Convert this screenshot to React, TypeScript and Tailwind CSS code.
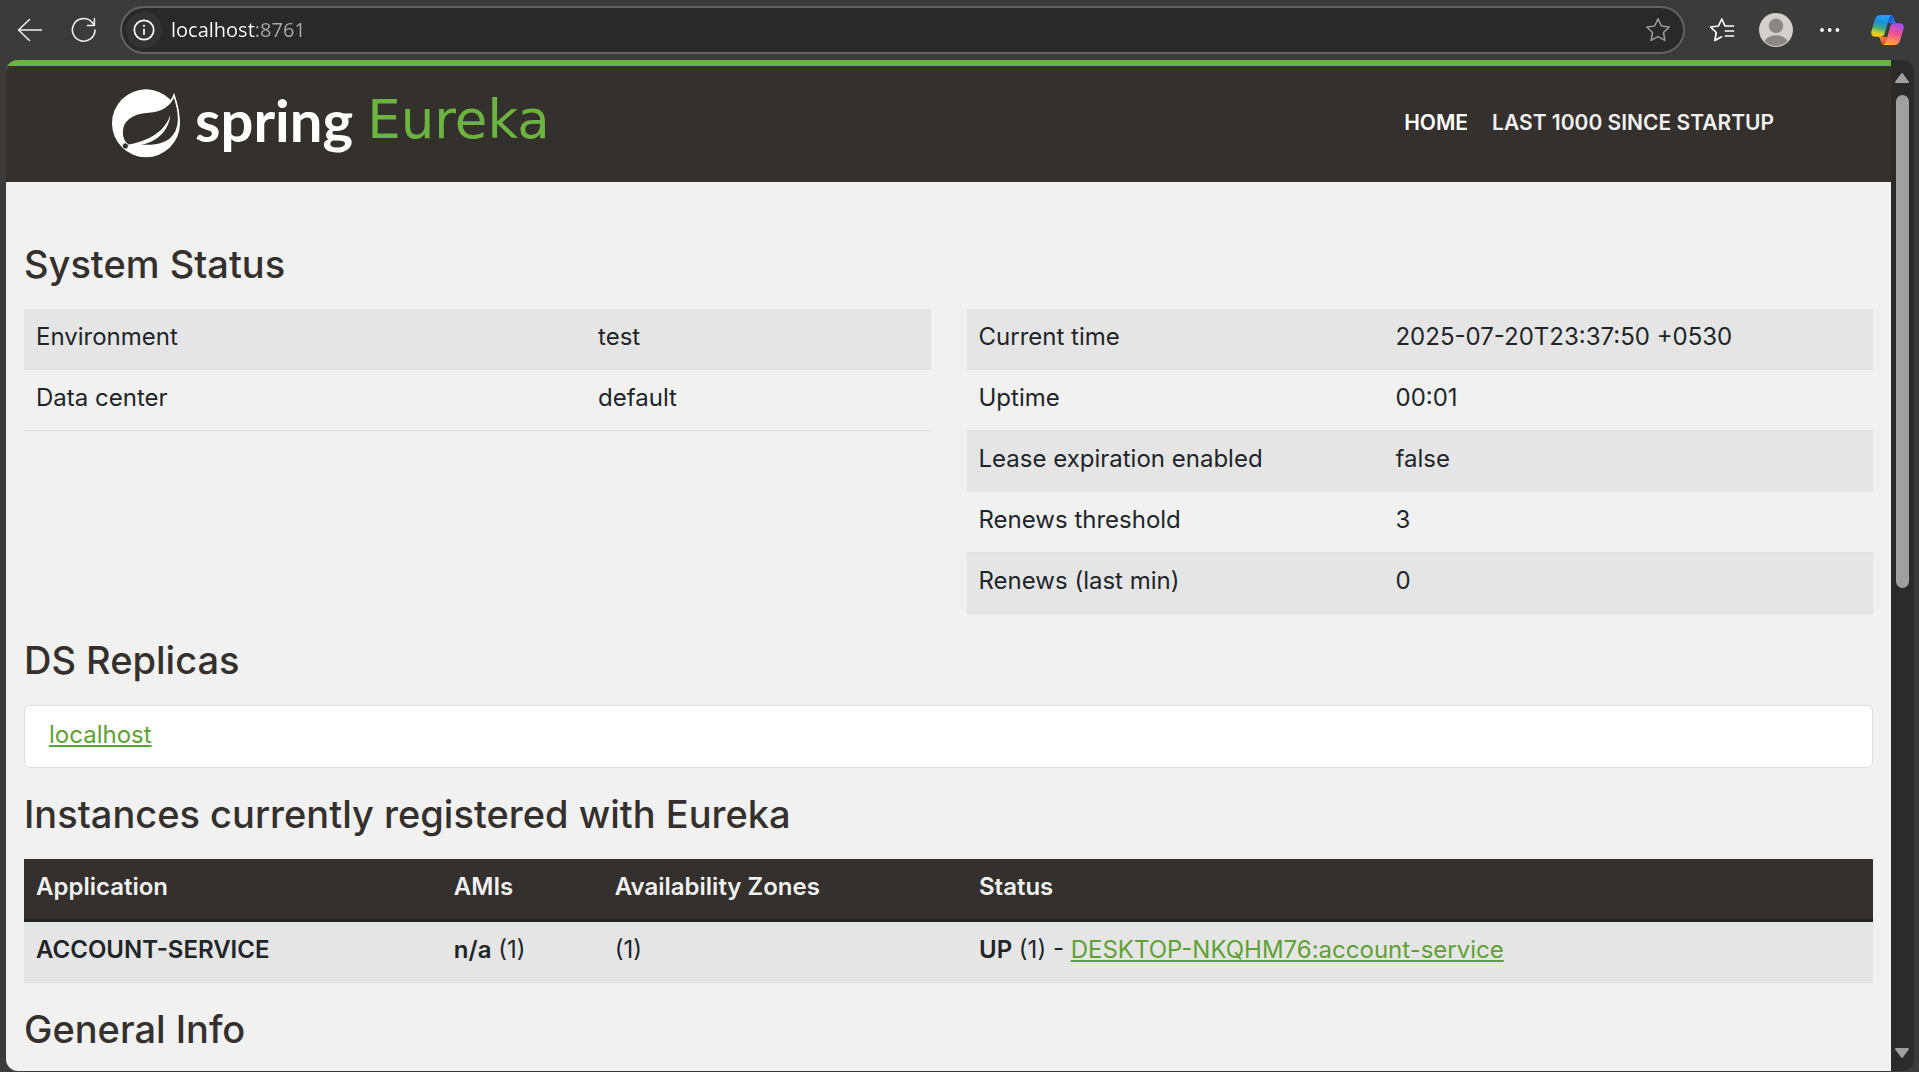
import type { ReactNode } from "react";

const environmentRows: [string, string][] = [
  ["Environment", "test"],
  ["Data center", "default"],
];

const runtimeRows: [string, string][] = [
  ["Current time", "2025-07-20T23:37:50 +0530"],
  ["Uptime", "00:01"],
  ["Lease expiration enabled", "false"],
  ["Renews threshold", "3"],
  ["Renews (last min)", "0"],
];

function CopilotIcon() {
  return (
    <svg width="33" height="30" viewBox="0 0 98 90" aria-hidden="true">
      <defs>
        <linearGradient id="cpLeft" x1="0.6" y1="0" x2="0.35" y2="1">
          <stop offset="0" stopColor="#22a5f5" />
          <stop offset="0.35" stopColor="#1b8fdc" />
          <stop offset="0.62" stopColor="#3fae7a" />
          <stop offset="0.85" stopColor="#d6d02a" />
          <stop offset="1" stopColor="#ffc800" />
        </linearGradient>
        <linearGradient id="cpRight" x1="0.6" y1="0" x2="0.35" y2="1">
          <stop offset="0" stopColor="#a84df0" />
          <stop offset="0.45" stopColor="#ee5191" />
          <stop offset="0.8" stopColor="#ff8a66" />
          <stop offset="1" stopColor="#ffb04d" />
        </linearGradient>
        <linearGradient id="cpTop" x1="0" y1="0" x2="1" y2="1">
          <stop offset="0" stopColor="#0d3fc0" />
          <stop offset="1" stopColor="#2b8ff0" />
        </linearGradient>
        <linearGradient id="cpBottom" x1="0" y1="0" x2="0.6" y2="1">
          <stop offset="0" stopColor="#ff9a30" />
          <stop offset="1" stopColor="#e83a3f" />
        </linearGradient>
      </defs>
      <path d="M48 0h9c7 0 10 4 12 11l3 9c1 3 3 5 7 5H52z" fill="url(#cpTop)" />
      <path d="M50 90h-9c-7 0-10-4-12-11l-3-9c-1-3-3-5-7-5h27z" fill="url(#cpBottom)" />
      <path d="M30 0h34c-6 1-9 5-11 12L41 54c-2 8-6 11-13 11H14C4 65-2 60 1 48L11 14C14 4 20 0 30 0z" fill="url(#cpLeft)" />
      <path d="M68 90H34c6-1 9-5 11-12l12-42c2-8 6-11 13-11h14c10 0 16 5 13 17L87 76c-3 10-9 14-19 14z" fill="url(#cpRight)" />
    </svg>
  );
}

function SpringLeaf() {
  return (
    <svg width="70" height="70" viewBox="0 0 210 210" aria-hidden="true">
      <circle cx="105" cy="106" r="102" fill="#fff" />
      <path
        d="M189 22C180 46 158 68 112 72C62 75 33 98 33 133C33 150 41 166 53 173C95 171 142 180 176 155C215 124 205 70 189 22Z"
        fill="#34302d"
        stroke="#fff"
        strokeWidth="5"
      />
      <path d="M52 170C105 160 158 138 178 82C172 140 120 176 54 174Z" fill="#fff" />
      <circle cx="43" cy="174" r="9" fill="#34302d" stroke="#fff" strokeWidth="2" />
    </svg>
  );
}

function BrowserBar() {
  return (
    <div className="flex h-[60px] shrink-0 items-center px-[15px]">
      <button aria-label="Back" className="flex size-[30px] items-center justify-center">
        <svg width="26" height="24" viewBox="0 0 26 24" fill="none" stroke="#eee" strokeWidth="1.6" strokeLinecap="round" strokeLinejoin="round">
          <path d="M12.5 1.5 1.5 12l11 10.5M1.5 12h23" />
        </svg>
      </button>
      <button aria-label="Refresh" className="ml-6 flex size-[30px] items-center justify-center">
        <svg width="26" height="26" viewBox="0 0 26 26" fill="none" stroke="#eee" strokeWidth="1.6" strokeLinecap="round" strokeLinejoin="round">
          <path d="M24 13A11.3 11.3 0 1 1 20.8 5L23 7.8M23.4 1.5v7h-7" />
        </svg>
      </button>
      <div className="ml-[21px] flex h-12 flex-1 items-center rounded-full border-2 border-[#626262] bg-[#292929] pr-3 pl-1">
        <button aria-label="View site information" className="flex size-9 shrink-0 items-center justify-center rounded-full bg-[#333333]">
          <svg width="22" height="22" viewBox="0 0 22 22" fill="none" stroke="#fff" strokeWidth="1.7">
            <circle cx="11" cy="11" r="9.7" />
            <path d="M11 9.7v6" />
            <circle cx="11" cy="6.8" r="1.1" fill="#fff" stroke="none" />
          </svg>
        </button>
        <input
          aria-label="Address"
          defaultValue="localhost:8761"
          className="ml-[9px] min-w-0 flex-1 bg-[linear-gradient(to_right,#ffffff_84px,#a9a9a9_84px)] bg-clip-text font-['Open_Sans',sans-serif] text-[20px] leading-7 text-transparent outline-none"
        />
        <button aria-label="Add to favorites">
          <svg width="26" height="26" viewBox="0 0 26 26" fill="none" stroke="#9a9a9a" strokeWidth="1.6" strokeLinejoin="round">
            <path d="M13 1.8 16.4 9l7.8 1-5.7 5.5 1.4 7.9L13 19.6l-6.9 3.8 1.4-7.9L1.8 10l7.8-1z" />
          </svg>
        </button>
      </div>
      <button aria-label="Favorites" className="ml-6">
        <svg width="26" height="26" viewBox="0 0 26 26" fill="none" stroke="#fff" strokeWidth="1.7" strokeLinecap="round" strokeLinejoin="round">
          <path d="M24.5 9H16l-3.2-7L9.4 9l-7.8 1 5.6 5.5-1.3 8 6.6-3.7M16.5 14h8M16.5 19h8" />
        </svg>
      </button>
      <button aria-label="Profile" className="ml-6">
        <svg width="34" height="34" viewBox="0 0 34 34">
          <defs>
            <clipPath id="avatar">
              <circle cx="17" cy="17" r="16" />
            </clipPath>
          </defs>
          <circle cx="17" cy="17" r="17" fill="#d2d0cd" />
          <g clipPath="url(#avatar)" fill="#8b8784">
            <circle cx="17" cy="12.8" r="7.2" />
            <ellipse cx="17" cy="32" rx="12.5" ry="9.8" />
          </g>
        </svg>
      </button>
      <button aria-label="Settings and more" className="ml-6">
        <svg width="26" height="26" viewBox="0 0 26 26" fill="#fff">
          <circle cx="5" cy="13" r="1.9" />
          <circle cx="12.7" cy="13" r="1.9" />
          <circle cx="20.4" cy="13" r="1.9" />
        </svg>
      </button>
      <button aria-label="Copilot" className="ml-7">
        <CopilotIcon />
      </button>
    </div>
  );
}

function Heading({ children }: { children: ReactNode }) {
  return <h1 className="mb-[25px] text-[38px] leading-[39px] font-medium text-[#34302d]">{children}</h1>;
}

function InfoTable({ rows, labelWidth }: { rows: [string, string][]; labelWidth: string }) {
  return (
    <table className="w-full table-fixed border-collapse">
      <tbody>
        {rows.map(([label, value]) => (
          <tr key={label} className="border-b border-[#dfe0e4] odd:bg-[#e5e5e5]">
            <td className={`${labelWidth} px-3 pt-[10px] pb-[14px]`}>{label}</td>
            <td className="px-3 pt-[10px] pb-[14px]">{value}</td>
          </tr>
        ))}
      </tbody>
    </table>
  );
}

function Scrollbar() {
  return (
    <div className="flex w-[23px] shrink-0 flex-col items-center bg-[#2b2b2b] py-3 pr-px">
      <svg width="16" height="12" viewBox="0 0 16 12" fill="#9f9f9f" stroke="#9f9f9f" strokeWidth="2" strokeLinejoin="round">
        <path d="M8 2 14 10H2z" />
      </svg>
      <div className="mt-[11px] h-[493px] w-[13px] rounded-full bg-[#9f9f9f]" />
      <svg className="mt-auto" width="16" height="12" viewBox="0 0 16 12" fill="#9f9f9f" stroke="#9f9f9f" strokeWidth="2" strokeLinejoin="round">
        <path d="M8 10 14 2H2z" />
      </svg>
    </div>
  );
}

export default function App() {
  return (
    <div className="flex h-screen flex-col overflow-hidden bg-[#3b3b3b] font-['Inter',sans-serif]">
      <BrowserBar />
      <div className="mr-[5px] mb-px ml-1.5 flex min-h-0 flex-1 overflow-hidden rounded-xl">
        <div className="min-w-0 flex-1 overflow-hidden bg-[#f1f1f1] text-2xl leading-9 text-[#212529]">
          <header className="flex h-[122px] items-center justify-between border-t-6 border-[#6db33f] bg-[#34302d] pr-[117px] pb-0.5 pl-[105px]">
            <a href="#home" className="flex items-center">
              <SpringLeaf />
              <span className="ml-3.5 pb-1.5 font-['Lato',sans-serif] text-[58px] leading-[64px] font-bold text-white">spring</span>
              <span className="ml-3.5 pb-1.5 font-['DejaVu_Sans',sans-serif] text-[53px] leading-[64px] text-[#6db33f]">Eureka</span>
            </a>
            <nav className="flex gap-6 text-[21px] leading-8 font-semibold">
              <a href="#home" className="text-white">HOME</a>
              <a href="#lastn" className="text-[#f1f1f1]">LAST 1000 SINCE STARTUP</a>
            </nav>
          </header>
          <main className="px-[18px] pt-[63px]">
            <Heading>System Status</Heading>
            <div className="grid grid-cols-2 items-start gap-9">
              <InfoTable rows={environmentRows} labelWidth="w-[62%]" />
              <InfoTable rows={runtimeRows} labelWidth="w-[46%]" />
            </div>
            <section className="mt-[27px]">
              <Heading>DS Replicas</Heading>
              <ul className="rounded-md border border-[#dfdfdf] bg-white">
                <li className="px-6 pt-[11px] pb-[14px]">
                  <a href="#localhost" className="text-[#5fa134] underline">localhost</a>
                </li>
              </ul>
            </section>
            <section className="mt-[27px]">
              <Heading>Instances currently registered with Eureka</Heading>
              <table className="w-full table-fixed border-collapse text-left">
                <thead>
                  <tr className="border-b-3 border-[#212529] bg-[#34302d] text-[#f1f1f1]">
                    <th className="w-[22.6%] px-3 pt-[10px] pb-[14px] font-semibold">Application</th>
                    <th className="w-[8.7%] px-3 pt-[10px] pb-[14px] font-semibold">AMIs</th>
                    <th className="w-[19.7%] px-3 pt-[10px] pb-[14px] font-semibold">Availability Zones</th>
                    <th className="px-3 pt-[10px] pb-[14px] font-semibold">Status</th>
                  </tr>
                </thead>
                <tbody>
                  <tr className="border-b border-[#dfe0e4] bg-[#e5e5e5]">
                    <td className="px-3 pt-[10px] pb-[14px] font-semibold">ACCOUNT-SERVICE</td>
                    <td className="px-3 pt-[10px] pb-[14px]"><b className="font-semibold">n/a</b> (1)</td>
                    <td className="px-3 pt-[10px] pb-[14px]">(1)</td>
                    <td className="px-3 pt-[10px] pb-[14px]">
                      <b className="font-semibold">UP</b> (1) - <a href="#instance" className="text-[#5fa134] underline">DESKTOP-NKQHM76:account-service</a>
                    </td>
                  </tr>
                </tbody>
              </table>
            </section>
            <section className="mt-[27px]">
              <Heading>General Info</Heading>
            </section>
          </main>
        </div>
        <Scrollbar />
      </div>
    </div>
  );
}
